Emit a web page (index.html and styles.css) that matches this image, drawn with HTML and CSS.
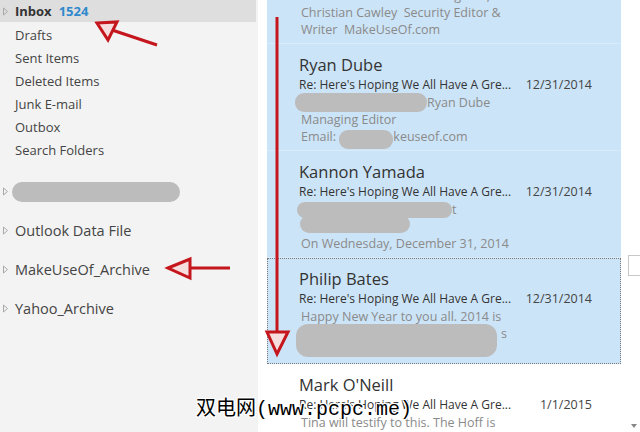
FILE: index.html
```html
<!DOCTYPE html>
<html lang="en">
<head>
    <meta charset="UTF-8">
    <title>Outlook - Inbox</title>
    <link rel="stylesheet" href="styles.css">
</head>
<body>
    <div class="app">
        <nav class="folders">
            <div class="folder selected"><span class="twisty"></span><b>Inbox</b><span class="count">1524</span></div>
            <div class="folder"><span class="twisty blank"></span>Drafts</div>
            <div class="folder"><span class="twisty blank"></span>Sent Items</div>
            <div class="folder"><span class="twisty blank"></span>Deleted Items</div>
            <div class="folder"><span class="twisty blank"></span>Junk E-mail</div>
            <div class="folder"><span class="twisty blank"></span>Outbox</div>
            <div class="folder"><span class="twisty blank"></span>Search Folders</div>

            <div class="accounts">
                <div class="account"><span class="twisty"></span><span class="blur nav-blur"></span></div>
                <div class="account"><span class="twisty"></span>Outlook Data File</div>
                <div class="account"><span class="twisty"></span>MakeUseOf_Archive</div>
                <div class="account"><span class="twisty"></span>Yahoo_Archive</div>
            </div>
        </nav>

        <section class="list">
            <div class="msg sel first">
                <div class="from">Christian Cawley</div>
                <div class="subject"><span>Re: Here's Hoping We All Have A Gre...</span><span class="date">12/31/2014</span></div>
                <div class="line">He still Does that!!!!!!!!!!! Regards,</div>
                <div class="line">Christian Cawley&nbsp; Security Editor &amp;</div>
                <div class="line">Writer&nbsp; MakeUseOf.com</div>
            </div>

            <div class="msg sel">
                <div class="from">Ryan Dube</div>
                <div class="subject"><span>Re: Here's Hoping We All Have A Gre...</span><span class="date">12/31/2014</span></div>
                <div class="line"><span class="blur b-ryan"></span>Ryan Dube</div>
                <div class="line">Managing Editor</div>
                <div class="line">Email: <span class="blur b-mail"></span>keuseof.com</div>
            </div>

            <div class="msg sel">
                <div class="from">Kannon Yamada</div>
                <div class="subject"><span>Re: Here's Hoping We All Have A Gre...</span><span class="date">12/31/2014</span></div>
                <div class="line"><span class="blur b-kan1"></span>t</div>
                <div class="line"><span class="blur b-kan2"></span></div>
                <div class="line">On Wednesday, December 31, 2014</div>
            </div>

            <div class="msg sel focus">
                <div class="from">Philip Bates</div>
                <div class="subject"><span>Re: Here's Hoping We All Have A Gre...</span><span class="date">12/31/2014</span></div>
                <div class="line">Happy New Year to you all. 2014 is</div>
                <div class="line"><span class="blur b-phil"></span>s</div>
                <div class="line"></div>
            </div>

            <div class="msg">
                <div class="from">Mark O'Neill</div>
                <div class="subject"><span>Re: Here's Hoping We All Have A Gre...</span><span class="date">1/1/2015</span></div>
                <div class="line">Tina will testify to this. The Hoff is</div>
            </div>
        </section>

        <div class="scrollbar">
            <div class="thumb"></div>
            <div class="down"></div>
        </div>
    </div>

    <!-- red annotation arrows drawn over the screenshot -->
    <svg class="arrows" width="640" height="432" viewBox="0 0 640 432">
        <g stroke="#c4161c" stroke-width="3" fill="#f7dede" stroke-linejoin="miter">
            <line x1="157" y1="45" x2="112" y2="30"/>
            <polygon points="97,23 117,22 108,40"/>
            <line x1="230" y1="268" x2="188" y2="268"/>
            <polygon points="168,268 190,259 190,278"/>
            <line x1="277" y1="17" x2="277" y2="334"/>
            <polygon points="277,354 267,332 288,332"/>
        </g>
    </svg>

    <div class="watermark">双电网(www.pcpc.me)</div>
</body>
</html>
```

FILE: styles.css
```css
* {
    box-sizing: border-box;
}
body {
    margin: 0;
    width: 640px;
    height: 432px;
    overflow: hidden;
    font-family: "Open Sans", "Noto Sans", sans-serif;
    color: #444;
    background: #fff;
}
.app {
    display: flex;
    height: 432px;
}

/* folder pane */
.folders {
    width: 258px;
    flex: none;
    background: #f3f3f3;
    font-size: 13px;
}
.folder {
    height: 23px;
    display: flex;
    align-items: center;
    margin-right: 2px;
}
.folder.selected {
    height: 22px;
    margin-bottom: 1px;
    background: #dedede;
    color: #333;
}
.folder b {
    font-weight: 700;
}
.count {
    color: #2f89cc;
    font-weight: 700;
    margin-left: 7px;
}
.twisty {
    width: 15px;
    height: 9px;
    flex: none;
    background: url("data:image/svg+xml;utf8,<svg xmlns='http://www.w3.org/2000/svg' width='8' height='9'><path d='M3.5 1 L7.5 4.5 L3.5 8 Z' fill='none' stroke='%23a8a8a8'/></svg>") no-repeat 0 0;
}
.twisty.blank {
    background: none;
}
.accounts {
    padding-top: 11px;
}
.account {
    height: 39px;
    display: flex;
    align-items: center;
    font-size: 14.5px;
}
.blur {
    display: inline-block;
    background: #bcbcbc;
    border-radius: 9px;
    vertical-align: top;
}
.nav-blur {
    width: 168px;
    height: 20px;
    margin-left: -3px;
    border-radius: 10px;
}

/* message list */
.list {
    width: 370px;
    flex: none;
    padding: 0 7px 0 9px;
    overflow: hidden;
}
.msg {
    height: 107px;
    padding: 10px 29px 0 32px;
    border-bottom: 1px solid #d9eaf8;
}
.msg.sel {
    background: #cce4f7;
}
.msg.first {
    margin-top: -63px;
}
.msg.focus {
    border: 1px dotted #7a7a7a;
    padding: 9px 28px 0 31px;
    height: 106px;
}
.from {
    height: 22px;
    line-height: 22px;
    font-size: 16.5px;
    color: #333;
}
.subject {
    height: 18px;
    line-height: 18px;
    font-size: 12px;
    color: #333;
    display: flex;
    justify-content: space-between;
}
.date {
    color: #444;
    font-size: 12.5px;
}
.line {
    height: 17px;
    line-height: 17px;
    font-size: 12.5px;
    color: #8a8a8a;
    white-space: nowrap;
    padding-left: 2px;
}
.b-ryan {
    width: 132px;
    height: 19px;
    margin: -1px 0 0 -6px;
}
.b-mail {
    width: 54px;
    height: 19px;
    margin: 2px 0 0 0;
}
.b-kan1 {
    width: 155px;
    height: 16px;
    margin: 1px 0 0 -4px;
}
.b-kan2 {
    width: 110px;
    height: 18px;
    margin: -3px 0 0 -1px;
}
.b-phil {
    width: 201px;
    height: 33px;
    margin: -1px 4px 0 -5px;
    border-radius: 12px;
}

/* scrollbar */
.scrollbar {
    flex: 1;
    background: #fff;
    display: flex;
    flex-direction: column;
    justify-content: space-between;
    padding: 255px 0 4px 0;
}
.thumb {
    height: 21px;
    border: 1px solid #c8c8c8;
    border-right: none;
    background: #fff;
}
.down {
    width: 0;
    height: 0;
    margin-left: 3px;
    border-left: 3px solid transparent;
    border-right: 3px solid transparent;
    border-top: 4px solid #888;
}

/* overlays */
.arrows {
    position: absolute;
    left: 0;
    top: 0;
    pointer-events: none;
}
.watermark {
    position: absolute;
    left: 196px;
    top: 397px;
    font-family: "Liberation Mono", "Noto Sans CJK SC", monospace;
    font-size: 20px;
    line-height: 26px;
    color: #000;
    text-shadow: 1px 0 #fff, -1px 0 #fff, 0 1px #fff, 0 -1px #fff, 1px 1px #fff, -1px -1px #fff, 1px -1px #fff, -1px 1px #fff;
}
```
